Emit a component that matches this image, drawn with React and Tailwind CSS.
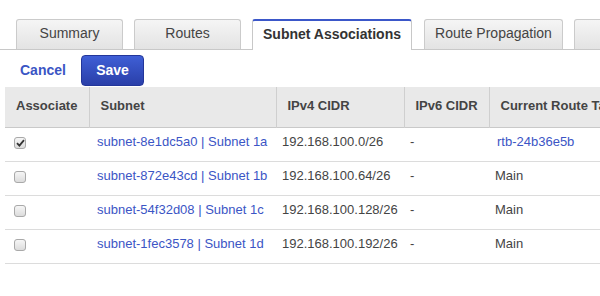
const TABS = [
  { name: 'Summary', w: 'w-[107px]' },
  { name: 'Routes', w: 'w-[107px]' },
  { name: 'Subnet Associations', w: 'w-[160px]', active: true },
  { name: 'Route Propagation', w: 'w-[139px]' },
  { name: '', w: 'w-[60px]' },
]

const ROWS = [
  { subnet: 'subnet-8e1dc5a0 | Subnet 1a', cidr: '192.168.100.0/26', route: 'rtb-24b36e5b', checked: true },
  { subnet: 'subnet-872e43cd | Subnet 1b', cidr: '192.168.100.64/26', route: 'Main' },
  { subnet: 'subnet-54f32d08 | Subnet 1c', cidr: '192.168.100.128/26', route: 'Main' },
  { subnet: 'subnet-1fec3578 | Subnet 1d', cidr: '192.168.100.192/26', route: 'Main' },
]

function Checkbox({ checked }) {
  return (
    <div className="w-[12px] h-[12px] rounded-[3px] border border-[#a9a9a9] bg-gradient-to-b from-[#f6f6f6] to-[#dcdcdc] flex items-center justify-center">
      {checked && (
        <svg width="9" height="8" viewBox="0 0 9 8">
          <path d="M1 4.2 L3.4 6.6 L8 1.2" fill="none" stroke="#333" strokeWidth="1.8" />
        </svg>
      )}
    </div>
  )
}

export default function App() {
  return (
    <div className="w-[600px] h-[296px] bg-white overflow-hidden text-[#444] font-['Liberation_Sans',Arial,sans-serif]">
      {/* tabs */}
      <div className="pt-[19px] border-b border-[#c8c8c8] h-[50px] flex pl-[16px] gap-[11px]">
        {TABS.map((t, i) =>
          t.active ? (
            <div
              key={i}
              className={`${t.w} shrink-0 h-[31px] bg-white border-t-2 border-t-[#3b57c9] border-x border-x-[#c8c8c8] rounded-t-[3px] text-[14px] font-bold text-[#333] flex items-center justify-center pb-[2px] relative z-10`}
            >
              {t.name}
            </div>
          ) : (
            <div
              key={i}
              className={`${t.w} shrink-0 h-[30px] bg-gradient-to-b from-[#f5f5f5] to-[#e3e3e3] border border-b-0 border-[#cbcbcb] rounded-t-[3px] text-[14px] text-[#444] flex items-center justify-center pb-[2px] ${i === 3 ? 'ml-px' : ''}`}
            >
              {t.name}
            </div>
          )
        )}
      </div>

      {/* actions */}
      <div className="flex items-center h-[37px] pl-[20px] pt-[4px]">
        <span className="text-[14px] font-bold text-[#3a55c4] w-[61px]">Cancel</span>
        <button className="w-[63px] h-[31px] rounded-[4px] border border-[#23369a] bg-gradient-to-b from-[#3f5fd6] to-[#2a3fa9] text-white text-[14px] font-bold flex items-center justify-center">
          Save
        </button>
      </div>

      {/* table */}
      <div className="pl-[5px]">
        <table className="w-[700px] table-fixed border-collapse text-[13px]">
          <colgroup>
            <col className="w-[84px]" />
            <col className="w-[187px]" />
            <col className="w-[128px]" />
            <col className="w-[85px]" />
            <col className="w-[216px]" />
          </colgroup>
          <thead>
            <tr className="h-[40px] bg-[#e9e9e9] border-b border-[#c9c9c9] text-left font-bold text-[#444]">
              <th className="pl-[11px] pb-[2px] font-bold">Associate</th>
              <th className="pl-[11px] pb-[2px] font-bold border-l border-[#cfcfcf]">Subnet</th>
              <th className="pl-[11px] pb-[2px] font-bold border-l border-[#cfcfcf]">IPv4 CIDR</th>
              <th className="pl-[11px] pb-[2px] font-bold border-l border-[#cfcfcf]">IPv6 CIDR</th>
              <th className="pl-[11px] pb-[2px] font-bold border-l border-[#cfcfcf] whitespace-nowrap">Current Route Table</th>
            </tr>
          </thead>
          <tbody>
            {ROWS.map((r) => (
              <tr key={r.subnet} className="h-[34px] border-b border-[#dcdcdc] align-middle">
                <td className="pl-[9px] pb-[2px]">
                  <Checkbox checked={r.checked} />
                </td>
                <td className="pl-[8px] pb-[4px] text-[#3b55c5] whitespace-nowrap">{r.subnet}</td>
                <td className="pl-[6px] pb-[4px]">{r.cidr}</td>
                <td className="pl-[6px] pb-[4px]">-</td>
                <td className={r.route === 'Main' ? 'pl-[6px] pb-[4px]' : 'pl-[8px] pb-[4px] text-[#3b55c5]'}>{r.route}</td>
              </tr>
            ))}
          </tbody>
        </table>
      </div>
    </div>
  )
}
